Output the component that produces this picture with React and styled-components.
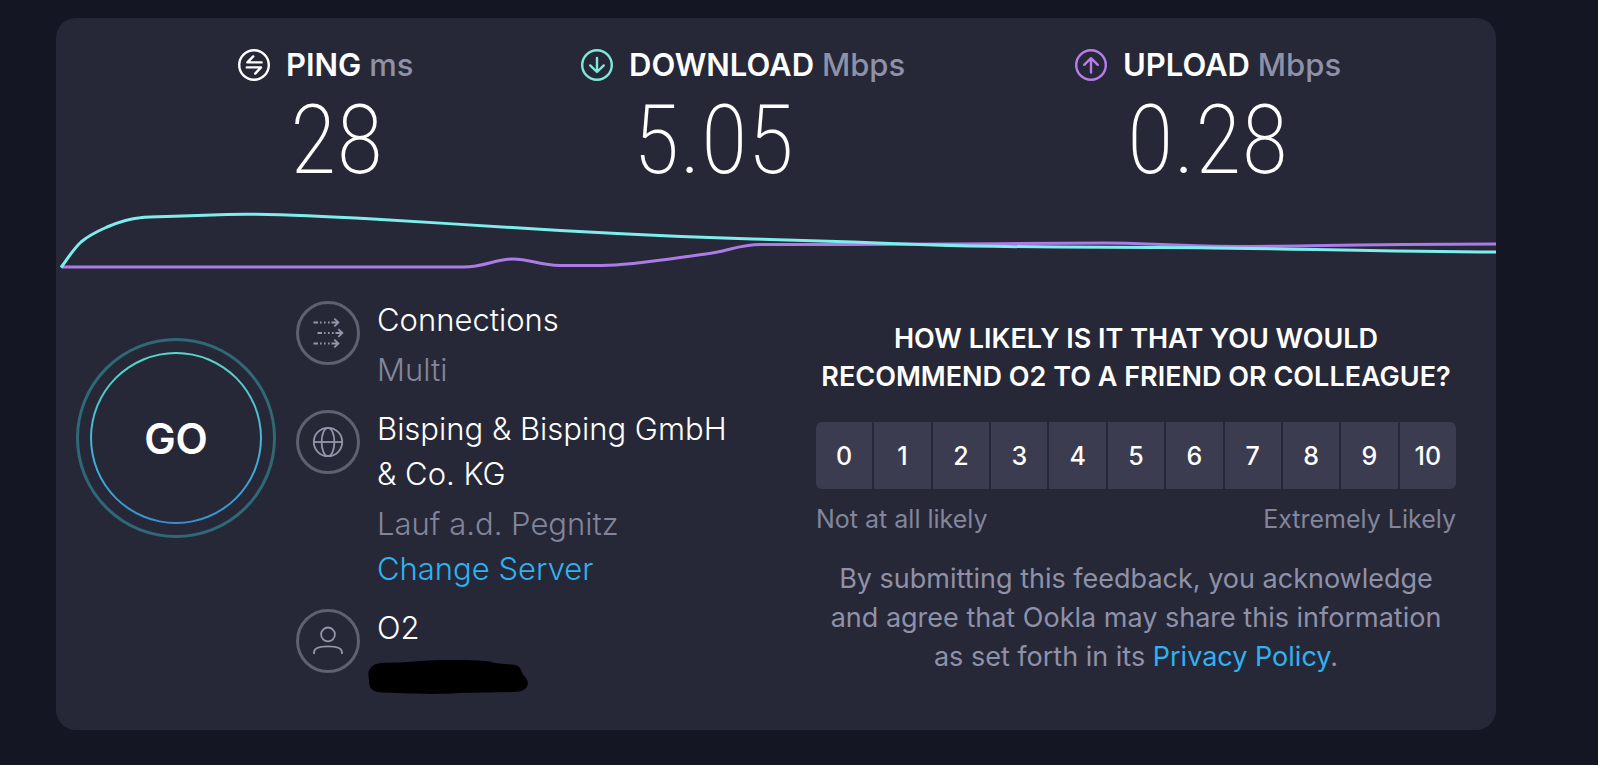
import React, { useState } from 'react'
import styled, { createGlobalStyle } from 'styled-components'

const scores = [0, 1, 2, 3, 4, 5, 6, 7, 8, 9, 10]

const PingIcon = () => (
  <MetricIcon viewBox='0 0 32 32' $color='#ffffff'>
    <circle cx='16' cy='16' r='14.8' />
    <path d='M15.2 7.4L9.4 13.4H23.6M8.8 18.4H23L17.2 24.6' />
  </MetricIcon>
)

const DownloadIcon = () => (
  <MetricIcon viewBox='0 0 32 32' $color='#7de9dc'>
    <circle cx='16' cy='16' r='14.8' />
    <path d='M16 9V22.6M9.2 16.4L16 23L22.8 16.4' />
  </MetricIcon>
)

const UploadIcon = () => (
  <MetricIcon viewBox='0 0 32 32' $color='#b87ded'>
    <circle cx='16' cy='16' r='14.8' />
    <path d='M16 23.4V9.6M9.2 15.8L16 9.2L22.8 15.8' />
  </MetricIcon>
)

const ConnectionsIcon = () => (
  <InfoIcon viewBox='0 0 64 64'>
    <circle className='ring' cx='32' cy='32' r='30.5' />
    <path d='M17.5 21.5H22M24 21.5h1.6M28 21.5h1.6M32 21.5h1.6M35.5 21.5H42M38.3 17.6L42.4 21.5L38.3 25.4' />
    <path d='M21.5 32H26M28 32h1.6M32 32h1.6M36 32h1.6M39.5 32H46M42.3 28.1L46.4 32L42.3 35.9' />
    <path d='M17.5 42.5H22M24 42.5h1.6M28 42.5h1.6M32 42.5h1.6M35.5 42.5H42M38.3 38.6L42.4 42.5L38.3 46.4' />
  </InfoIcon>
)

const GlobeIcon = () => (
  <InfoIcon viewBox='0 0 64 64'>
    <circle className='ring' cx='32' cy='32' r='30.5' />
    <circle cx='32' cy='32' r='14.2' />
    <ellipse cx='32' cy='32' rx='6.4' ry='14.2' />
    <path d='M17.8 32H46.2' />
  </InfoIcon>
)

const UserIcon = () => (
  <InfoIcon viewBox='0 0 64 64'>
    <circle className='ring' cx='32' cy='32' r='30.5' />
    <circle cx='32' cy='25.4' r='6.9' />
    <path d='M18 45V43.4C18 39.4 22.6 37.4 32 37.4S46 39.4 46 43.4V45' />
  </InfoIcon>
)

function App() {
  const [score, setScore] = useState(null)

  return (
    <Page>
      <GlobalStyle />
      <Card>
        <Metrics>
          <Metric>
            <PingIcon />
            <h2>
              PING <span>ms</span>
            </h2>
            <p>28</p>
          </Metric>
          <Metric>
            <DownloadIcon />
            <h2>
              DOWNLOAD <span>Mbps</span>
            </h2>
            <p>5.05</p>
          </Metric>
          <Metric>
            <UploadIcon />
            <h2>
              UPLOAD <span>Mbps</span>
            </h2>
            <p>0.28</p>
          </Metric>
        </Metrics>

        <Chart viewBox='0 0 1440 70' preserveAspectRatio='none'>
          <path
            stroke='#ab7be8'
            d='M6 62H408C428 62 440 54 457 54S484 60.5 504 60.5H546C576 60.5 622 52.5 650 49C672 46 684 39.5 704 39.5H790C860 39.5 890 39 940 38.7L1050 38C1090 38 1110 41 1180 41.5C1250 41 1300 39.5 1440 39'
          />
          <path
            stroke='#7deeec'
            d='M5 62.5C12 53 17 44.5 25 37C32 31 42 26 51 22C62 17.5 74 13.5 84 12.8C92 12 102 11.8 111 11.6L171 9.5C180 9.200 190 9.200 200 9.300C240 10 280 12 317 14C380 17.5 440 22 504 25.500L561 28.500C610 31 650 32.500 697 34L797 37C822 38 846 39 871 39.700C910 41 950 41.700 1004 42L1144 42.700C1230 43.500 1330 46.500 1440 47'
          />
        </Chart>

        <Details>
          <GoButton type='button'>
            <span>GO</span>
          </GoButton>

          <InfoList>
            <InfoItem>
              <ConnectionsIcon />
              <div>
                <h3>Connections</h3>
                <p>Multi</p>
              </div>
            </InfoItem>
            <InfoItem>
              <GlobeIcon />
              <div>
                <h3>Bisping &amp; Bisping GmbH &amp; Co. KG</h3>
                <p>Lauf a.d. Pegnitz</p>
                <a href='#servers'>Change Server</a>
              </div>
            </InfoItem>
            <InfoItem>
              <UserIcon />
              <div>
                <h3>O2</h3>
                <HiddenAddress viewBox='0 0 160 34'>
                  <path d='M8 4C14 2 28 3 40 2C70 -1 105 -0.500 122 1.500C130 5 143 3 150 6C154 9 153 13 157 17C162 22 160 29 153 31C146 33 110 32 84 33.500C60 34.500 30 33.500 9 32C1 30 1 24 1 20C0 14 -1 8 8 4Z' />
                </HiddenAddress>
              </div>
            </InfoItem>
          </InfoList>

          <Survey>
            <h3>
              HOW LIKELY IS IT THAT YOU WOULD RECOMMEND O2 TO A FRIEND OR
              COLLEAGUE?
            </h3>
            <Scale>
              {scores.map((value) => (
                <ScoreButton
                  key={value}
                  type='button'
                  $selected={score === value}
                  onClick={() => setScore(value)}
                >
                  {value}
                </ScoreButton>
              ))}
            </Scale>
            <ScaleLabels>
              <span>Not at all likely</span>
              <span>Extremely Likely</span>
            </ScaleLabels>
            <p>
              By submitting this feedback, you acknowledge and agree that Ookla
              may share this information as set forth in its{' '}
              <a href='#privacy'>Privacy Policy</a>.
            </p>
          </Survey>
        </Details>
      </Card>
    </Page>
  )
}

const GlobalStyle = createGlobalStyle`
  * {
    box-sizing: border-box;
    margin: 0;
    padding: 0;
  }
  body {
    background: #141623;
    color: #ffffff;
    font-family: Inter, 'Liberation Sans', sans-serif;
  }
  button {
    border: none;
    color: inherit;
    font-family: inherit;
    cursor: pointer;
  }
  a {
    color: #2fb2f2;
    text-decoration: none;
  }
`

const Page = styled.main`
  padding: 18px 102px 35px 56px;
`

const Card = styled.section`
  background: #262837;
  border-radius: 20px;
  padding-bottom: 36px;
  overflow: hidden;
`

const Metrics = styled.div`
  display: grid;
  grid-template-columns: 343fr 494fr 421fr;
  padding: 31px 0 0 182px;
`

const Metric = styled.div`
  display: grid;
  grid-template-columns: 32px 1fr;
  column-gap: 16px;
  h2 {
    font-size: 31px;
    font-weight: 600;
    line-height: 32px;
    white-space: nowrap;
  }
  h2 span {
    color: #8f91a8;
    font-weight: 500;
  }
  p {
    grid-column: 2;
    padding-left: 4px;
    font-family: 'Roboto Condensed', Roboto, sans-serif;
    font-size: 96px;
    font-weight: 200;
    line-height: 118px;
  }
`

const MetricIcon = styled.svg`
  width: 32px;
  height: 32px;
  fill: none;
  stroke: ${(p) => p.$color};
  stroke-width: 2.4;
  stroke-linecap: round;
  stroke-linejoin: round;
`

const Chart = styled.svg`
  display: block;
  width: 100%;
  height: 70px;
  margin-top: 6px;
  path {
    fill: none;
    stroke-width: 3;
  }
`

const Details = styled.div`
  display: grid;
  grid-template-columns: 200px 25fr 32fr;
  align-items: start;
  gap: 20px;
  padding: 22px 40px 0 20px;
`

const GoButton = styled.button`
  display: flex;
  width: 200px;
  height: 200px;
  margin-top: 41px;
  padding: 11px;
  background: none;
  border: 3px solid #2f6877;
  border-radius: 50%;
  span {
    display: flex;
    flex: 1;
    align-items: center;
    justify-content: center;
    border: 2px solid transparent;
    border-radius: 50%;
    background: linear-gradient(#262837, #262837) padding-box,
      linear-gradient(#5ad9c8, #3fa9d8 70%, #3a8fd0) border-box;
    font-size: 42px;
    font-weight: 600;
  }
`

const InfoList = styled.ul`
  display: flex;
  flex-direction: column;
  gap: 14px;
  padding-right: 56px;
  list-style: none;
`

const InfoItem = styled.li`
  display: grid;
  grid-template-columns: 64px 1fr;
  column-gap: 17px;
  font-size: 31px;
  line-height: 45px;
  h3 {
    margin-bottom: 5px;
    font-size: 31px;
    font-weight: 300;
  }
  p,
  a {
    display: block;
    font-weight: 300;
  }
  p {
    color: #83859c;
  }
`

const InfoIcon = styled.svg`
  width: 64px;
  height: 64px;
  margin-top: 4px;
  fill: none;
  stroke: #9395ab;
  stroke-width: 1.8;
  .ring {
    stroke: #5f6172;
    stroke-width: 3;
  }
`

const HiddenAddress = styled.svg`
  display: block;
  width: 160px;
  height: 34px;
  margin: 10px 0 0 -9px;
`

const Survey = styled.section`
  padding-top: 23px;
  text-align: center;
  h3 {
    font-size: 27px;
    font-weight: 600;
    line-height: 38px;
  }
  p {
    margin-top: 24px;
    padding: 0 6px;
    color: #8f91a8;
    font-size: 27px;
    line-height: 39px;
  }
`

const Scale = styled.div`
  display: grid;
  grid-template-columns: repeat(11, 1fr);
  gap: 2px;
  margin-top: 26px;
  border-radius: 6px;
  overflow: hidden;
`

const ScoreButton = styled.button`
  height: 67px;
  background: ${(p) => (p.$selected ? '#4d4f66' : '#3b3c4f')};
  font-size: 25px;
  font-weight: 500;
`

const ScaleLabels = styled.div`
  display: flex;
  justify-content: space-between;
  margin-top: 14px;
  color: #83859c;
  font-size: 25px;
  line-height: 32px;
`

export default App
